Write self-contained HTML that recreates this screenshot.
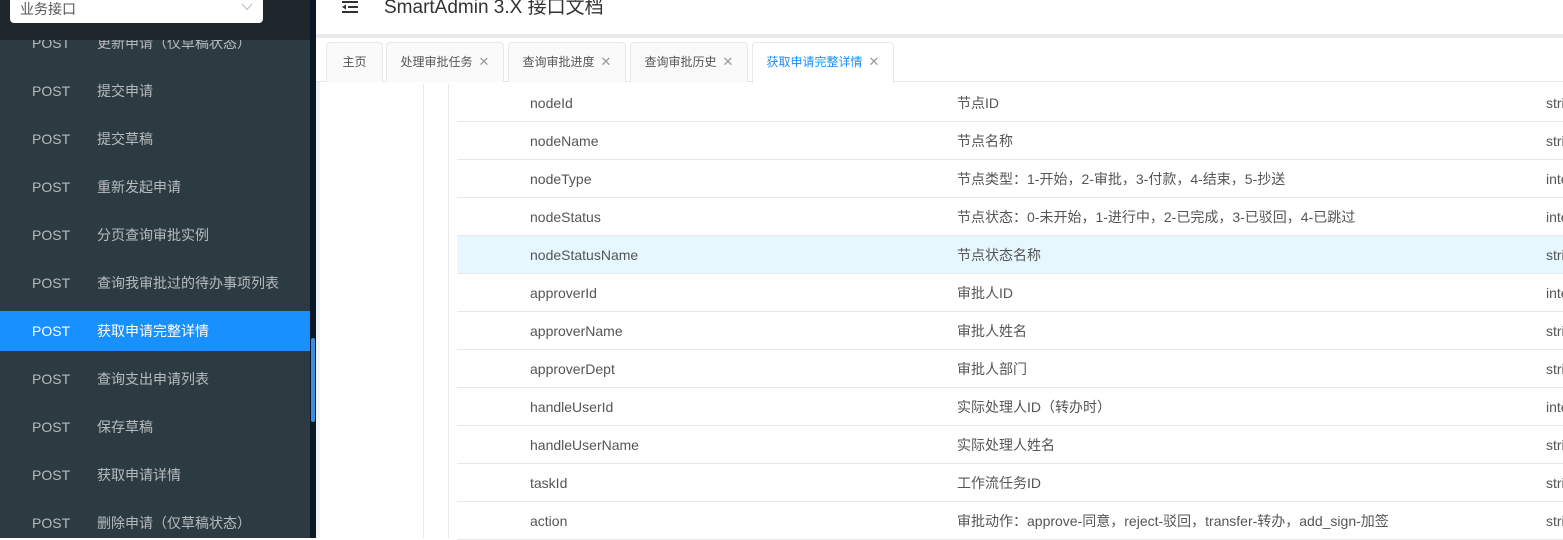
<!DOCTYPE html>
<html><head><meta charset="utf-8"><style>
*{margin:0;padding:0;box-sizing:border-box}
body{width:1563px;height:538px;overflow:hidden;position:relative;background:#fff;font-family:"Liberation Sans","Noto Sans CJK SC",sans-serif;font-size:14px}
.sb{position:absolute;left:0;top:0;width:310px;height:538px;background:#2c3a41;overflow:hidden}
.sbtop{position:absolute;left:0;top:0;width:310px;height:40px;background:#1f272c;z-index:2}
.sel{position:absolute;left:10px;top:-10px;width:253px;height:33px;background:#fff;border-radius:4px;color:#555;padding:9px 0 0 10px;font-size:14px}
.sel svg{position:absolute;right:10px;top:13px}
.it{position:absolute;left:0;width:310px;height:40px;line-height:40px;color:rgba(255,255,255,.65)}
.it b{font-weight:normal;position:absolute;left:32px}
.it i{font-style:normal;position:absolute;left:97px}
.it.a{background:#1890ff;color:#fff}
.trk{position:absolute;left:310px;top:0;width:6px;height:538px;background:#0b1828}
.thumb{position:absolute;left:311px;top:338px;width:4px;height:84px;background:#3a8ee6;border-radius:2px}
.hd{position:absolute;left:316px;top:0;width:1247px;background:#fff;border-bottom:4px solid #e8eaec;height:38px}
.tabs{position:absolute;left:316px;top:38px;width:1247px;height:44px;border-bottom:1px solid #e8e8e8}
.tab{position:absolute;top:4px;height:40px;border:1px solid #e8e8e8;border-bottom:none;background:#fafafa;border-radius:4px 4px 0 0;font-size:12px;color:#555;line-height:38px;text-align:center}
.tab.a{background:#fff;color:#1890ff;height:41px}
.x{color:#999;margin-left:6px;font-size:13px}
.row{position:absolute;left:457px;width:1106px;height:38px;border-bottom:1px solid #e8e8e8;color:#555;line-height:38px}
.row span{position:absolute}
.c1{left:73px}.c2{left:500px}.c3{left:1089px}
</style></head><body>
<div class="sb">
<div class="it" style="top:23px"><b>POST</b><i>更新申请（仅草稿状态）</i></div>
<div class="it" style="top:71px"><b>POST</b><i>提交申请</i></div>
<div class="it" style="top:119px"><b>POST</b><i>提交草稿</i></div>
<div class="it" style="top:167px"><b>POST</b><i>重新发起申请</i></div>
<div class="it" style="top:215px"><b>POST</b><i>分页查询审批实例</i></div>
<div class="it" style="top:263px"><b>POST</b><i>查询我审批过的待办事项列表</i></div>
<div class="it a" style="top:311px"><b>POST</b><i>获取申请完整详情</i></div>
<div class="it" style="top:359px"><b>POST</b><i>查询支出申请列表</i></div>
<div class="it" style="top:407px"><b>POST</b><i>保存草稿</i></div>
<div class="it" style="top:455px"><b>POST</b><i>获取申请详情</i></div>
<div class="it" style="top:503px"><b>POST</b><i>删除申请（仅草稿状态）</i></div>
<div class="sbtop"><div class="sel">业务接口<svg width="12" height="8" viewBox="0 0 12 8"><path d="M1 1 L6 6.5 L11 1" fill="none" stroke="#bbb" stroke-width="1"/></svg></div></div>
</div>
<div class="trk"></div><div class="thumb"></div>
<div class="hd">
<svg style="position:absolute;left:24px;top:0" width="20" height="14" viewBox="0 0 20 14"><rect x="2" y="1" width="16" height="2" fill="#333"/><rect x="8" y="6" width="10" height="2" fill="#333"/><rect x="2" y="11" width="16" height="2" fill="#333"/><path d="M2 7 L6 4.5 V9.5Z" fill="#333"/></svg>
<div style="position:absolute;left:68px;top:-8px;font-size:19px;color:#333">SmartAdmin 3.X 接口文档</div>
</div>
<div class="tabs">
<div class="tab" style="left:10px;width:57px">主页</div>
<div class="tab" style="left:70px;width:118px">处理审批任务<span class="x">✕</span></div>
<div class="tab" style="left:192px;width:118px">查询审批进度<span class="x">✕</span></div>
<div class="tab" style="left:314px;width:118px">查询审批历史<span class="x">✕</span></div>
<div class="tab a" style="left:436px;width:142px">获取申请完整详情<span class="x">✕</span></div>
</div>
<div style="position:absolute;left:316px;top:82px;width:4px;height:456px;background:#f0f2f5"></div>
<div style="position:absolute;left:423px;top:84px;width:1px;height:454px;background:#e8e8e8"></div>
<div style="position:absolute;left:448px;top:84px;width:1px;height:454px;background:#e8e8e8"></div>
<div class="row" style="top:84px"><span class="c1">nodeId</span><span class="c2">节点ID</span><span class="c3">string</span></div>
<div class="row" style="top:122px"><span class="c1">nodeName</span><span class="c2">节点名称</span><span class="c3">string</span></div>
<div class="row" style="top:160px"><span class="c1">nodeType</span><span class="c2">节点类型：1-开始，2-审批，3-付款，4-结束，5-抄送</span><span class="c3">integer</span></div>
<div class="row" style="top:198px"><span class="c1">nodeStatus</span><span class="c2">节点状态：0-未开始，1-进行中，2-已完成，3-已驳回，4-已跳过</span><span class="c3">integer</span></div>
<div class="row" style="top:236px;background:#e6f7ff"><span class="c1">nodeStatusName</span><span class="c2">节点状态名称</span><span class="c3">string</span></div>
<div class="row" style="top:274px"><span class="c1">approverId</span><span class="c2">审批人ID</span><span class="c3">integer</span></div>
<div class="row" style="top:312px"><span class="c1">approverName</span><span class="c2">审批人姓名</span><span class="c3">string</span></div>
<div class="row" style="top:350px"><span class="c1">approverDept</span><span class="c2">审批人部门</span><span class="c3">string</span></div>
<div class="row" style="top:388px"><span class="c1">handleUserId</span><span class="c2">实际处理人ID（转办时）</span><span class="c3">integer</span></div>
<div class="row" style="top:426px"><span class="c1">handleUserName</span><span class="c2">实际处理人姓名</span><span class="c3">string</span></div>
<div class="row" style="top:464px"><span class="c1">taskId</span><span class="c2">工作流任务ID</span><span class="c3">string</span></div>
<div class="row" style="top:502px"><span class="c1">action</span><span class="c2">审批动作：approve-同意，reject-驳回，transfer-转办，add_sign-加签</span><span class="c3">string</span></div>
</body></html>
